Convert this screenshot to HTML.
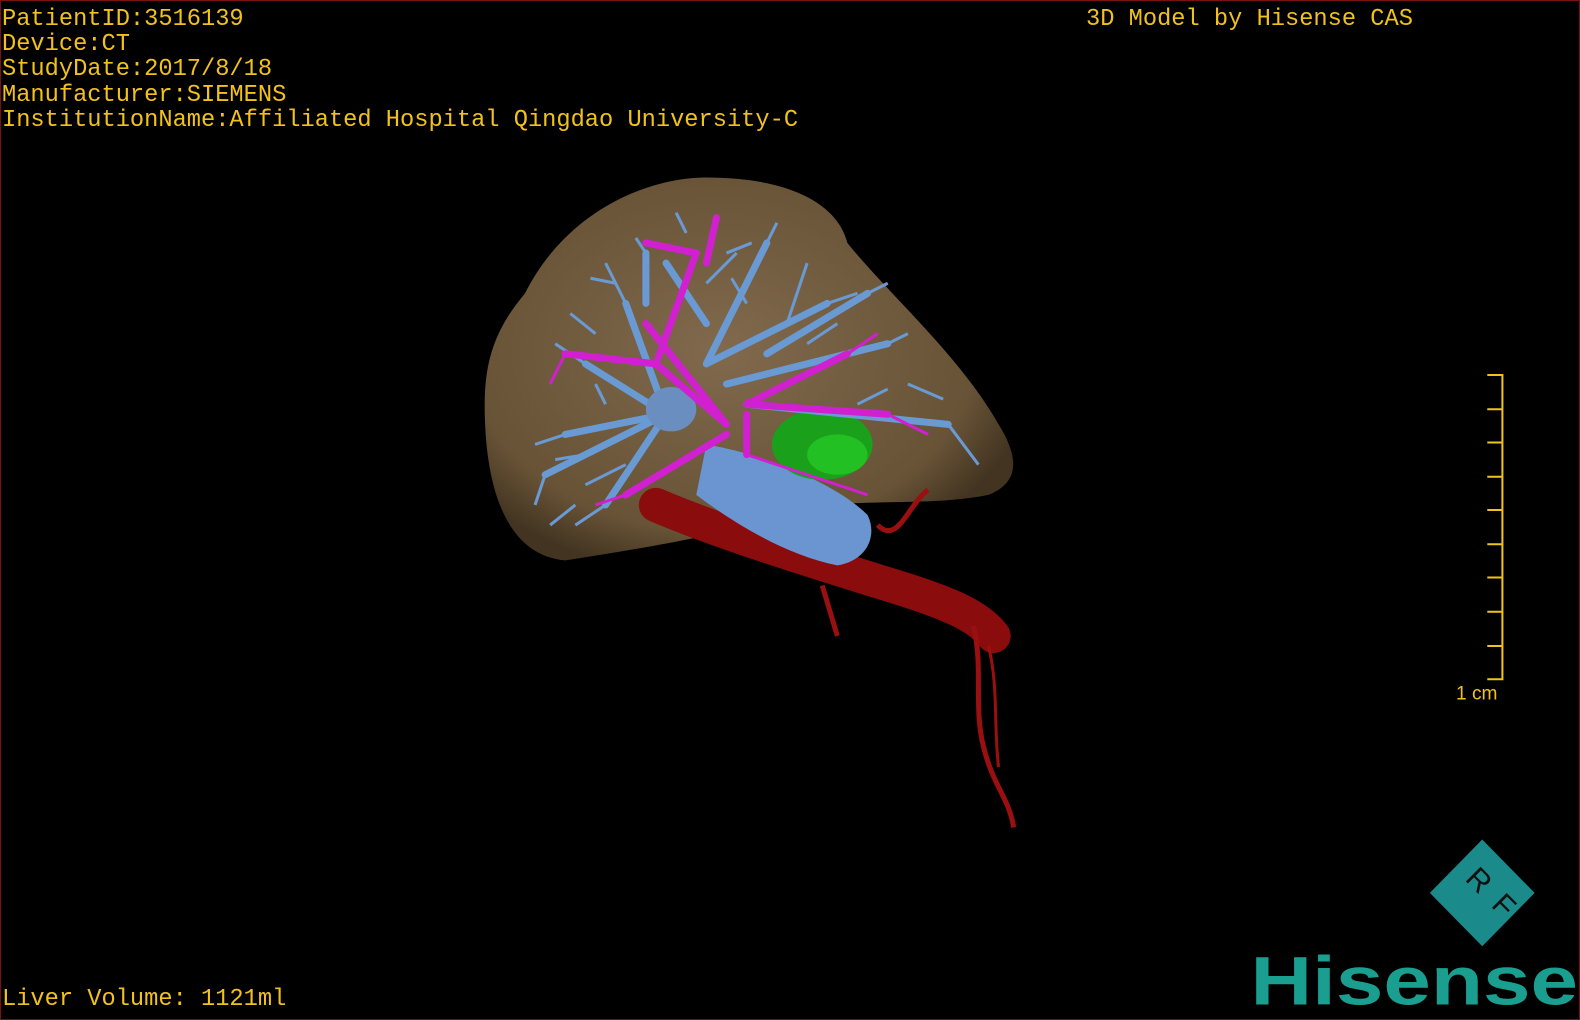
<!DOCTYPE html>
<html><head><meta charset="utf-8"><style>
html,body{margin:0;padding:0;background:#000;}
#c{position:relative;width:1580px;height:1020px;overflow:hidden;background:#000;box-sizing:border-box;border:1px solid #7a1010;}
.t{position:absolute;font-family:"Liberation Mono",monospace;font-size:23.7px;color:#f2c21c;line-height:25.2px;white-space:pre;}
svg{position:absolute;left:0;top:0;}
</style></head><body><div id="c">
<svg width="1580" height="1020" viewBox="0 0 1568 1012">
<defs>
<radialGradient id="lv" cx="0.45" cy="0.45" r="0.6"><stop offset="0" stop-color="#8f7555"/><stop offset="0.8" stop-color="#735c3c"/><stop offset="1" stop-color="#4a3a25"/></radialGradient>
</defs>
<path d="M520,290 C560,210 640,175 700,175 C780,175 830,200 840,240 C880,290 950,350 990,420 C1015,460 1005,480 980,490 C930,500 880,495 820,500 C760,520 660,540 560,555 C500,550 480,480 480,400 C480,350 495,320 520,290 Z" fill="url(#lv)" opacity="0.9"/>
<path d="M650,500 C720,530 820,560 900,585 C940,598 970,610 985,630" stroke="#8a0c0c" stroke-width="34" fill="none" stroke-linecap="round"/>
<path d="M965,620 C975,660 965,700 975,740 C985,780 1000,790 1005,820" stroke="#9a1010" stroke-width="5" fill="none"/>
<path d="M980,640 C990,680 985,720 990,760" stroke="#9a1010" stroke-width="3" fill="none"/>
<path d="M815,580 L830,630 M870,520 C890,540 900,500 920,485" stroke="#9a1010" stroke-width="5" fill="none"/>
<path d="M700,440 C760,450 830,480 860,510 C870,530 860,555 830,560 C780,550 730,520 690,490 Z" fill="#6b95d0"/>
<ellipse cx="815" cy="440" rx="50" ry="35" fill="#1aa01a"/>
<ellipse cx="830" cy="450" rx="30" ry="20" fill="#22c022"/>
<g stroke="#6a9ad4" stroke-width="7" fill="none" stroke-linecap="round">
<path d="M660,410 L560,430 M660,410 L580,360 M660,410 L620,300 M660,410 L600,500 M660,410 L540,470 M700,360 L760,240 M700,360 L820,300 M720,380 L880,340 M740,400 L940,420 M760,350 L860,290 M640,300 L640,250 M700,320 L660,260"/>
</g>
<g stroke="#6a9ad4" stroke-width="3" fill="none">
<path d="M560,430 L530,440 M580,360 L550,340 M620,300 L600,260 M600,500 L570,520 M540,470 L530,500 M760,240 L770,220 M820,300 L850,290 M880,340 L900,330 M940,420 L970,460 M860,290 L880,280 M640,250 L630,235 M600,400 L590,380 M700,280 L730,250 M780,320 L800,260 M620,460 L580,480 M590,330 L565,310 M610,280 L585,275 M740,300 L725,275 M800,340 L830,320 M900,380 L935,395 M580,450 L550,455 M570,500 L545,520 M680,230 L670,210 M720,250 L745,240 M850,400 L880,385"/>
</g>
<ellipse cx="665" cy="405" rx="25" ry="22" fill="#6a8ec0"/>
<g stroke="#d020d0" stroke-width="7" fill="none" stroke-linecap="round">
<path d="M720,420 L650,360 L690,250 M650,360 L560,350 M720,420 L640,320 M740,400 L880,410 M740,400 L840,350 M720,430 L620,490 M740,410 L740,450 M700,260 L710,215 M690,250 L640,240"/>
</g>
<g stroke="#d020d0" stroke-width="3" fill="none">
<path d="M560,350 L545,380 M620,490 L590,500 M880,410 L920,430 M840,350 L870,330 M740,450 L860,490"/>
</g>
<polygon points="1470,832 1522,885 1470,938 1418,885" fill="#1a8a8a"/>
<text x="1452" y="872" font-family="Liberation Sans,sans-serif" font-size="30" fill="#111" transform="rotate(45 1452 872)">R</text>
<text x="1478" y="898" font-family="Liberation Sans,sans-serif" font-size="30" fill="#111" transform="rotate(45 1478 898)">F</text>
<text x="1240" y="996" font-family="Liberation Sans,sans-serif" font-weight="bold" font-size="68" fill="#1a9e90" textLength="325" lengthAdjust="spacingAndGlyphs">Hisense</text>
<g stroke="#f2c21c" stroke-width="2" fill="none">
<path d="M1475,371 H1490 V673 H1475"/>
<path d="M1475,405 H1490 M1475,438 H1490 M1475,472 H1490 M1475,505 H1490 M1475,539 H1490 M1475,572 H1490 M1475,606 H1490 M1475,640 H1490"/>
</g>
<text x="1444" y="693" font-family="Liberation Sans,sans-serif" font-size="19" fill="#f2c21c">1 cm</text>
</svg>
<div class="t" style="left:1px;top:6px">PatientID:3516139
Device:CT
StudyDate:2017/8/18
Manufacturer:SIEMENS
InstitutionName:Affiliated Hospital Qingdao University-C</div>
<div class="t" style="left:1085px;top:6px">3D Model by Hisense CAS</div>
<div class="t" style="left:1px;top:986px">Liver Volume: 1121ml</div>
</div></body></html>
